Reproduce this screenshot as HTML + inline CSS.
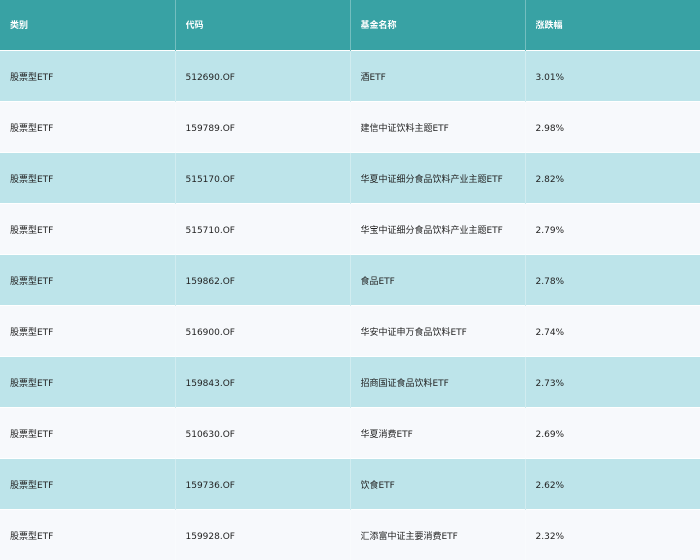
<!DOCTYPE html>
<html><head><meta charset="utf-8"><style>
html,body{margin:0;padding:0;width:700px;height:560px;overflow:hidden;background:#f7f9fc;}
table{border-collapse:collapse;width:700px;table-layout:fixed;font-family:"DejaVu Sans","Noto Sans CJK SC",sans-serif;font-size:9px;color:#222;}
td,th{padding:0 0 0 10px;text-align:left;border-left:1px solid rgba(255,255,255,0.3);vertical-align:middle;}
td div,th div{height:12px;line-height:12px;overflow:hidden;white-space:nowrap;position:relative;top:2px;}
th div{top:1px;}
td:first-child,th:first-child{border-left:none;}
th{background:#38a2a4;color:#fff;font-weight:bold;height:50px;}
td{height:50px;border-top:1px solid #fff;}
tr:nth-child(odd) td{background:#bde4ea;}
tr:nth-child(even) td{background:#f7f9fc;}
</style></head><body>
<table>
<colgroup><col style="width:175px"><col style="width:175px"><col style="width:175px"><col style="width:175px"></colgroup>
<thead><tr><th><div>类别</div></th><th><div>代码</div></th><th><div>基金名称</div></th><th><div>涨跌幅</div></th></tr></thead>
<tbody>
<tr><td><div>股票型ETF</div></td><td><div>512690.OF</div></td><td><div>酒ETF</div></td><td><div>3.01%</div></td></tr>
<tr><td><div>股票型ETF</div></td><td><div>159789.OF</div></td><td><div>建信中证饮料主题ETF</div></td><td><div>2.98%</div></td></tr>
<tr><td><div>股票型ETF</div></td><td><div>515170.OF</div></td><td><div>华夏中证细分食品饮料产业主题ETF</div></td><td><div>2.82%</div></td></tr>
<tr><td><div>股票型ETF</div></td><td><div>515710.OF</div></td><td><div>华宝中证细分食品饮料产业主题ETF</div></td><td><div>2.79%</div></td></tr>
<tr><td><div>股票型ETF</div></td><td><div>159862.OF</div></td><td><div>食品ETF</div></td><td><div>2.78%</div></td></tr>
<tr><td><div>股票型ETF</div></td><td><div>516900.OF</div></td><td><div>华安中证申万食品饮料ETF</div></td><td><div>2.74%</div></td></tr>
<tr><td><div>股票型ETF</div></td><td><div>159843.OF</div></td><td><div>招商国证食品饮料ETF</div></td><td><div>2.73%</div></td></tr>
<tr><td><div>股票型ETF</div></td><td><div>510630.OF</div></td><td><div>华夏消费ETF</div></td><td><div>2.69%</div></td></tr>
<tr><td><div>股票型ETF</div></td><td><div>159736.OF</div></td><td><div>饮食ETF</div></td><td><div>2.62%</div></td></tr>
<tr><td><div>股票型ETF</div></td><td><div>159928.OF</div></td><td><div>汇添富中证主要消费ETF</div></td><td><div>2.32%</div></td></tr>
</tbody></table>
</body></html>
